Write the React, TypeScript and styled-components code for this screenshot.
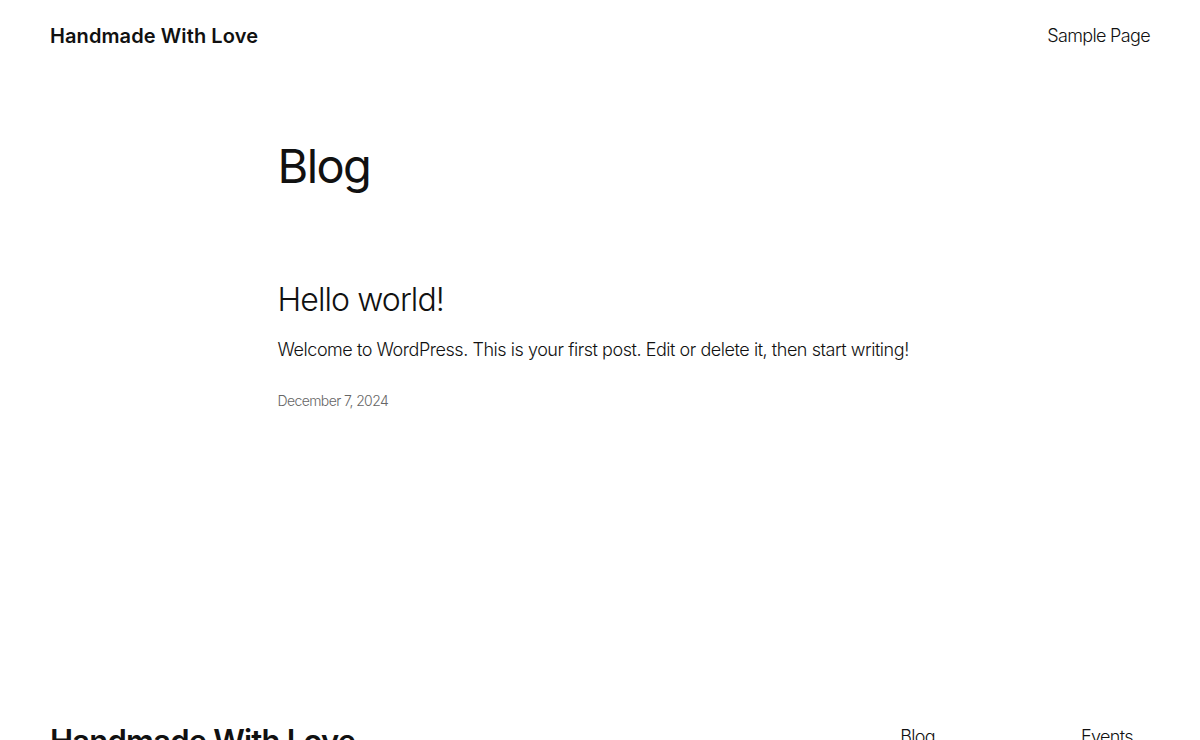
import React from 'react'
import styled, { createGlobalStyle } from 'styled-components'

const GlobalStyle = createGlobalStyle`
  html, body {
    margin: 0;
    padding: 0;
    background: #fff;
    color: #111;
    font-family: Inter, "Noto Sans", sans-serif;
  }
`

const Header = styled.header`
  display: flex;
  align-items: center;
  justify-content: space-between;
  padding: 0 50px;
  height: 71px;
`

const SiteTitle = styled.a`
  font-size: 20px;
  font-weight: 600;
  letter-spacing: 0.1px;
  color: #111;
  text-decoration: none;
`

const NavLink = styled.a`
  font-size: 18px;
  font-weight: 300;
  letter-spacing: -0.65px;
  color: #111;
  text-decoration: none;
`

const Main = styled.main`
  width: 645px;
  margin: 0 auto;
  padding-top: 67px;
  min-height: 640px;
  box-sizing: border-box;
`

const PageTitle = styled.h1`
  margin: 0;
  font-size: 47px;
  font-weight: 400;
  letter-spacing: -1.6px;
  line-height: 1.2;
`

const Post = styled.article`
  margin-top: 87px;
`

const PostTitle = styled.h2`
  margin: 0;
  font-size: 32px;
  font-weight: 300;
  letter-spacing: -0.9px;
  line-height: 1.2;
`

const Excerpt = styled.p`
  margin: 16px 0 0;
  font-size: 18px;
  font-weight: 300;
  letter-spacing: -0.45px;
  line-height: 1.5;
`

const PostDate = styled.time`
  display: block;
  margin-top: 29px;
  font-size: 14px;
  font-weight: 300;
  letter-spacing: -0.6px;
  color: #666;
`

const Footer = styled.footer`
  display: flex;
  align-items: flex-start;
  padding: 11px 50px 0;
`

const FooterTitle = styled.div`
  flex: 1;
  font-size: 31px;
  font-weight: 600;
  letter-spacing: -0.8px;
  line-height: 1.2;
`

const FooterNav = styled.nav`
  display: flex;
  gap: 146px;
  padding-top: 4px;
  margin-right: 17px;
`

export default function App() {
  return (
    <>
      <GlobalStyle />
      <Header>
        <SiteTitle href="#">Handmade With Love</SiteTitle>
        <NavLink href="#">Sample Page</NavLink>
      </Header>
      <Main>
        <PageTitle>Blog</PageTitle>
        <Post>
          <PostTitle>Hello world!</PostTitle>
          <Excerpt>
            Welcome to WordPress. This is your first post. Edit or delete it, then start writing!
          </Excerpt>
          <PostDate>December 7, 2024</PostDate>
        </Post>
      </Main>
      <Footer>
        <FooterTitle>Handmade With Love</FooterTitle>
        <FooterNav>
          <NavLink href="#">Blog</NavLink>
          <NavLink href="#">Events</NavLink>
        </FooterNav>
      </Footer>
    </>
  )
}
